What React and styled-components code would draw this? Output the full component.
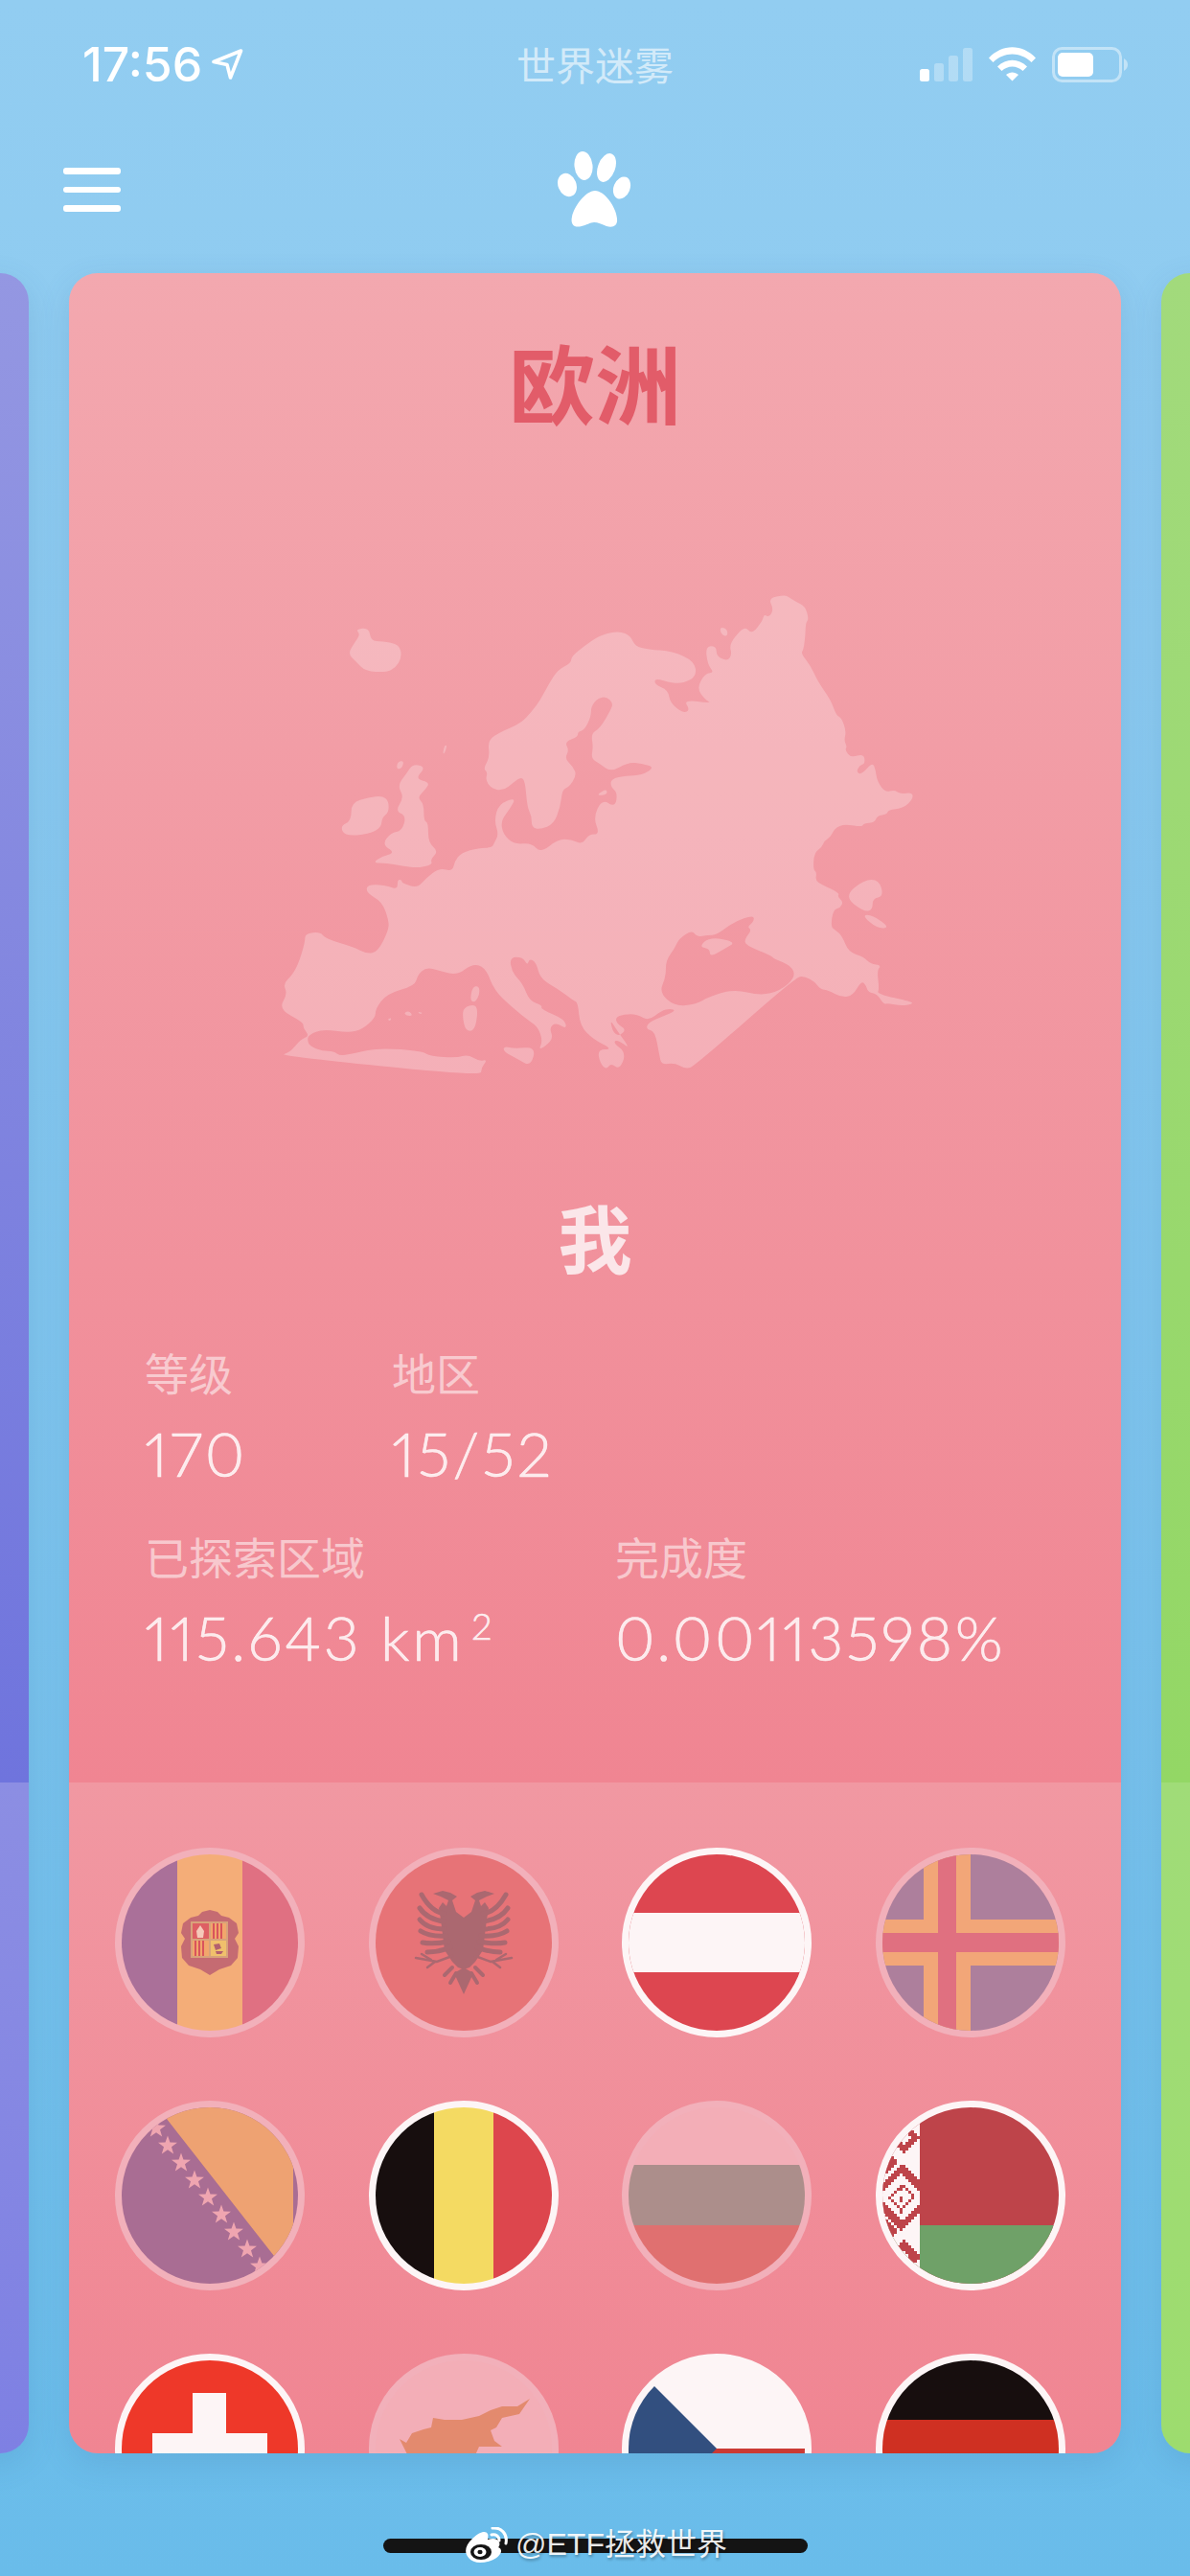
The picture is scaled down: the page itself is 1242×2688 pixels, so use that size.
import React from "react";
import styled, { createGlobalStyle } from "styled-components";

const GlobalStyle = createGlobalStyle`
  html, body {
    margin: 0;
    padding: 0;
    background: #69bcea;
  }
  * {
    box-sizing: border-box;
  }
`;

const CJK = `"Noto Sans CJK SC", "Noto Sans", sans-serif`;
const WHITE = "#fdf5f6";
const DIM_RING = "#f2b0ba";

const Screen = styled.div`
  position: relative;
  width: 1242px;
  height: 2688px;
  overflow: hidden;
  display: flex;
  flex-direction: column;
  background: linear-gradient(180deg, #92cdf1 0%, #8ccaf0 25%, #69bcea 100%);
  font-family: ${CJK};
`;

const StatusBar = styled.div`
  height: 134px;
  display: grid;
  grid-template-columns: 1fr auto 1fr;
  align-items: center;
  padding: 0 65px;
`;

const Clock = styled.div`
  display: flex;
  align-items: center;
  gap: 10px;
  padding-left: 21px;
  color: #fff;
  font-family: Inter, "Liberation Sans", sans-serif;
  font-size: 50px;
  font-weight: 500;
  line-height: 60px;
`;

const AppName = styled.div`
  margin-top: -3px;
  color: rgba(255, 255, 255, 0.6);
  font-size: 41px;
  line-height: 50px;
`;

const StatusIcons = styled.div`
  display: flex;
  justify-content: flex-end;
  align-items: center;
  gap: 17px;
`;

const Nav = styled.div`
  height: 151px;
  display: grid;
  grid-template-columns: 1fr auto 1fr;
  align-items: start;
  padding: 24px 66px 0;
`;

const MenuButton = styled.div`
  margin-top: 17px;
  width: 60px;
  display: flex;
  flex-direction: column;
  gap: 13px;
`;

const MenuLine = styled.span`
  display: block;
  height: 6.5px;
  border-radius: 3px;
  background: #fff;
`;

const Carousel = styled.div`
  display: flex;
  justify-content: center;
  gap: 42px;
  height: 2275px;
`;

const Card = styled.div`
  flex: 0 0 1098px;
  border-radius: 30px;
  overflow: hidden;
  display: flex;
  flex-direction: column;
  box-shadow: 0 10px 32px rgba(50, 100, 150, 0.16);
`;

const CardTop = styled.div`
  flex: 0 0 1575px;
  display: flex;
  flex-direction: column;
  align-items: center;
  padding-top: 60px;
  background: linear-gradient(180deg, ${(p) => p.$from}, ${(p) => p.$to});
`;

const CardBottom = styled.div`
  flex: 1;
  min-height: 0;
  overflow: hidden;
  background: linear-gradient(180deg, ${(p) => p.$from}, ${(p) => p.$to});
`;

const ContinentName = styled.h1`
  margin: 0;
  color: #e25c69;
  font-size: 90px;
  line-height: 104px;
  font-weight: 700;
`;

const ContinentMap = styled.svg`
  display: block;
  margin-top: 141px;
  width: 720px;
  height: 550px;
  flex: none;
`;

const PlayerName = styled.h2`
  margin: 105px 0 0;
  color: #fbe6e9;
  font-size: 77px;
  line-height: 90px;
  font-weight: 700;
`;

const Stats = styled.div`
  align-self: stretch;
  margin-top: 66px;
  padding-left: 79px;
  display: flex;
  flex-direction: column;
  gap: 36px;
`;

const StatRow = styled.div`
  display: flex;
`;

const Stat = styled.div`
  width: ${(p) => p.$width}px;
`;

const StatLabel = styled.div`
  color: rgba(255, 255, 255, 0.55);
  font-size: 46px;
  line-height: 60px;
`;

const StatValue = styled.div`
  margin-top: 16px;
  color: rgba(255, 255, 255, 0.82);
  font-family: Lato, Inter, sans-serif;
  font-weight: 300;
  font-size: 64px;
  font-variant-numeric: proportional-nums;
  letter-spacing: 2.6px;
  line-height: 80px;
  -webkit-text-stroke: 0.6px rgba(255, 255, 255, 0.82);
  white-space: nowrap;
`;

const Exponent = styled.sup`
  margin-left: 8px;
  font-size: 38px;
  line-height: 0;
  vertical-align: 22px;
`;

const FlagGrid = styled.div`
  display: grid;
  grid-template-columns: repeat(4, 198px);
  column-gap: 66.6px;
  row-gap: 66px;
  padding: 68px 58px 0 48px;
`;

const Flag = styled.div`
  width: 198px;
  height: 198px;
  border-radius: 50%;
  overflow: hidden;
  background: ${(p) => (p.$visited ? WHITE : DIM_RING)};
  border: 7px solid ${(p) => (p.$visited ? WHITE : DIM_RING)};
`;

const FlagArt = styled.svg`
  display: block;
  width: 184px;
  height: 184px;
`;

const HomeIndicator = styled.div`
  width: 443px;
  height: 15px;
  margin: 89px auto 0;
  border-radius: 8px;
  background: #141414;
`;

const Watermark = styled.div`
  position: absolute;
  left: 485px;
  top: 2634px;
  display: flex;
  align-items: center;
  gap: 8px;
  color: rgba(255, 255, 255, 0.92);
  font-family: "Liberation Sans", ${CJK};
  font-size: 32px;
  line-height: 42px;
  white-space: nowrap;
  text-shadow: 1px 2px 3px rgba(0, 0, 0, 0.3);
`;

const MAINLAND =
  "M1178 98L1215 88L1225 95L1240 108L1262 122L1270 160L1263 170L1262 210L1258 250L1252 262L1275 300L1290 345L1320 400L1332 445L1345 455L1355 495L1350 520L1357 540L1352 548L1365 572L1395 560L1398 590L1385 595L1378 615L1390 622L1415 585L1422 610L1425 640L1443 675L1465 668L1478 680L1505 675L1507 695L1485 722L1450 728L1448 740L1425 745L1420 765L1395 768L1390 778L1355 770L1340 775L1328 785L1318 810L1305 820L1300 838L1282 855L1280 905L1288 912L1285 938L1300 950L1340 975L1335 985L1348 1000L1342 1018L1325 1025L1320 1075L1330 1085L1345 1100L1360 1150L1395 1165L1410 1185L1435 1190L1425 1205L1430 1260L1425 1275L1505 1298L1505 1305L1480 1310L1450 1303L1440 1305L1425 1275L1405 1270L1400 1250L1390 1235L1370 1280L1345 1285L1315 1265L1295 1260L1285 1240L1260 1222L1240 1225L1010 1490L990 1498L965 1480L935 1485L930 1455L920 1385L900 1380L905 1360L940 1340L968 1325L955 1318L935 1325L905 1355L880 1335L850 1335L830 1345L835 1365L855 1380L840 1400L825 1390L818 1350L835 1385L865 1440L835 1410L825 1420L855 1450L840 1500L820 1480L810 1500L795 1480L790 1440L825 1440L780 1410L750 1370L745 1300L735 1295L700 1260L660 1230L650 1180L635 1170L630 1190L620 1165L590 1165L595 1210L620 1245L635 1295L665 1310L660 1320L715 1350L720 1380L695 1360L680 1375L690 1410L655 1445L665 1415L655 1375L635 1355L600 1320L555 1265L535 1195L505 1185L470 1220L430 1205L400 1195L380 1220L375 1250L310 1275L285 1320L285 1345L255 1380L225 1390L165 1380L135 1395L130 1410L135 1430L165 1445L190 1445L205 1460L240 1450L295 1435L390 1445L410 1460L470 1465L495 1455L520 1475L540 1470L525 1495L525 1520L65 1458L90 1450L115 1410L135 1400L120 1375L122 1360L65 1320L85 1275L75 1245L95 1220L110 1185L125 1120L125 1095L160 1090L170 1110L235 1135L265 1155L290 1150L315 1085L315 1055L300 1000L265 975L265 950L305 950L335 965L335 935L345 935L345 945L380 960L400 930L430 900L460 910L465 880L480 855L520 840L550 840L555 825L565 800L555 760L565 710L605 690L590 725L570 760L575 800L600 830L640 825L660 855L700 815L730 815L755 830L770 800L795 800L780 750L800 695L830 720L835 675L820 660L820 635L855 625L890 625L920 600L890 590L860 585L820 615L795 590L775 575L780 540L775 500L795 485L820 430L825 410L810 390L790 395L775 420L775 450L760 490L745 495L745 510L715 525L725 550L715 575L735 600L742 625L725 660L710 665L705 720L690 770L660 785L640 780L640 745L630 720L625 640L615 630L600 645L575 670L550 665L535 640L540 615L530 605L545 570L540 520L570 495L615 470L640 435L660 400L680 350L700 310L730 290L730 270L770 230L800 205L840 195L865 210L875 240L905 250L960 255L1010 285L1015 330L985 350L960 350L920 335L920 355L950 370L955 410L985 440L1000 430L985 400L1050 410L1035 400L1015 365L1035 320L1055 320L1040 295L1035 240L1060 240L1060 270L1085 285L1095 265L1090 240L1100 215L1125 180L1140 205L1165 165L1168 145L1180 155L1190 130Z";
const BLACK_SEA =
  "M965 1312L930 1270L945 1225L945 1175L965 1140L975 1110L1005 1085L1015 1105L1040 1100L1060 1100L1100 1060L1145 1040L1145 1060L1130 1075L1140 1085L1125 1110L1125 1130L1185 1160L1190 1170L1230 1190L1240 1225L1205 1265L1160 1280L1100 1260L1040 1285L1015 1305Z";
const CRIMEA = "M1020 1135L1045 1105L1105 1120L1080 1140L1045 1165L1045 1140Z";
const ISLANDS = [
  "M222 262L240 225L250 205L240 190L270 185L275 225L300 225L340 235L345 275L330 305L310 318L262 315L240 285Z",
  "M205 775L230 760L230 705L270 690L300 685L315 700L315 735L300 750L298 780L270 800L215 805Z",
  "M370 590L400 600L375 635L408 645L400 665L380 690L395 710L395 760L405 765L405 825L428 850L410 875L415 890L380 900L350 895L310 885L278 885L300 865L330 855L300 830L320 795L345 790L355 745L330 730L350 690L335 655L355 620Z",
  "M335 585L350 580L345 605L333 605Z",
  "M442 535L448 535L442 560L438 560Z",
  "M505 1255L520 1250L522 1275L512 1300L500 1295Z",
  "M485 1315L512 1305L518 1330L510 1385L490 1385L483 1345Z",
  "M578 1430L600 1438L650 1432L638 1490L610 1470L575 1445Z",
  "M350 1330L362 1325L370 1340L355 1340Z",
  "M312 1350L322 1345L318 1356Z",
  "M380 1328L392 1330L388 1336Z",
  "M790 680L810 665L812 680L795 685Z",
  "M1350 985L1395 935L1430 935L1440 985L1415 990L1415 1025L1395 1030Z",
  "M1390 1040L1415 1040L1455 1078L1425 1080Z",
  "M1068 182L1085 190L1085 212L1070 205Z",
];

// rounds the traced coast: each corner becomes a curve through the edge midpoints
const smoothCoast = (d) => {
  const pts = d
    .replace(/[MZ]/g, "")
    .split("L")
    .map((p) => p.trim().split(" ").map(Number));
  const mid = (a, b) => [(a[0] + b[0]) / 2, (a[1] + b[1]) / 2];
  const start = mid(pts[pts.length - 1], pts[0]);
  let out = `M${start[0]} ${start[1]}`;
  pts.forEach((p, i) => {
    const m = mid(p, pts[(i + 1) % pts.length]);
    out += `Q${p[0]} ${p[1]} ${m[0]} ${m[1]}`;
  });
  return `${out}Z`;
};

const Europe = () => (
  <ContinentMap viewBox="0 0 1568 1568" preserveAspectRatio="none">
    <path
      d={[MAINLAND, BLACK_SEA, CRIMEA].map(smoothCoast).join(" ")}
      fill="#fff"
      fillOpacity="0.25"
      fillRule="evenodd"
    />
    <path d={ISLANDS.map(smoothCoast).join(" ")} fill="#fff" fillOpacity="0.25" />
  </ContinentMap>
);

const starPoints = (cx, cy, r) => {
  const pts = [];
  for (let i = 0; i < 10; i++) {
    const rad = i % 2 === 0 ? r : r * 0.4;
    const a = -Math.PI / 2 + (i * Math.PI) / 5;
    pts.push(`${cx + rad * Math.cos(a)},${cy + rad * Math.sin(a)}`);
  }
  return pts.join(" ");
};

const Andorra = () => (
  <FlagArt viewBox="0 0 184 184">
    <rect width="58" height="184" fill="#aa7099" />
    <rect x="58" width="68" height="184" fill="#f4ad78" />
    <rect x="126" width="58" height="184" fill="#e07082" />
    <path
      d="M72 66L80 64L84 60L92 58L100 60L104 64L112 66L120 72L122 82L118 88L122 96L121 108L114 116L102 120L92 126L82 120L70 116L63 108L62 96L66 88L62 82L64 72Z"
      fill="#c56b72"
    />
    <rect x="72" y="70" width="39" height="38" fill="#d8a27a" />
    <rect x="74" y="72" width="17" height="16" fill="#de5f63" />
    <path d="M82 74L86 80L85 87L79 87L78 80Z" fill="#f5c9b9" />
    <rect x="93" y="72" width="16" height="16" fill="#f2a66c" />
    <path d="M96 72V88M100 72V88M104 72V88" stroke="#d9545c" strokeWidth="2" />
    <rect x="74" y="90" width="17" height="16" fill="#f2a66c" />
    <path d="M77 90V106M81 90V106M85 90V106" stroke="#d9545c" strokeWidth="2" />
    <rect x="93" y="90" width="16" height="16" fill="#f0c06c" />
    <path d="M96 94L102 93L104 98L98 100ZM98 101L106 101L104 104L99 104Z" fill="#b3606e" />
  </FlagArt>
);

const EAGLE_FEATHERS = [
  "M112 62Q126 60 136 42",
  "M112 70Q130 68 138 56",
  "M112 78Q130 78 138 68",
  "M110 85Q128 86 137 80",
  "M108 91Q124 94 135 92",
  "M106 97Q118 102 130 102",
];

const EagleHalf = () => (
  <g fill="#ab6870">
    <path d="M92 66L100 60L104 48L99 44L106 40L114 38L124 41L116 44L108 48L110 54L114 50L118 56L116 68L112 100L104 112L98 118L92 120Z" />
    <g fill="none" stroke="#ab6870" strokeWidth="5" strokeLinecap="round">
      {EAGLE_FEATHERS.map((d) => (
        <path key={d} d={d} />
      ))}
      <path d="M104 118L112 126M100 124L106 134" strokeWidth="4" />
    </g>
    <g fill="none" stroke="#ab6870" strokeWidth="2.5" strokeLinecap="round">
      <path d="M104 106L120 112L142 108M122 112L130 118M126 110L136 104" />
    </g>
    <path d="M92 118L102 124L92 146Z" />
  </g>
);

const Albania = () => (
  <FlagArt viewBox="0 0 184 184">
    <rect width="184" height="184" fill="#e77377" />
    <EagleHalf />
    <g transform="translate(184 0) scale(-1 1)">
      <EagleHalf />
    </g>
  </FlagArt>
);

const Austria = () => (
  <FlagArt viewBox="0 0 184 184">
    <rect width="184" height="184" fill="#dd4650" />
    <rect y="61" width="184" height="62" fill={WHITE} />
  </FlagArt>
);

const Aland = () => (
  <FlagArt viewBox="0 0 184 184">
    <rect width="184" height="184" fill="#ad7f9c" />
    <rect x="43" width="49" height="184" fill="#f2a678" />
    <rect y="68" width="184" height="48" fill="#f2a678" />
    <rect x="58" width="19" height="184" fill="#e07080" />
    <rect y="82" width="184" height="20" fill="#e07080" />
  </FlagArt>
);

const BOSNIA_STARS = [
  [36, 22],
  [48, 40],
  [62, 58],
  [76, 76],
  [90, 94],
  [104, 112],
  [117, 130],
  [131, 148],
  [144, 166],
];

const Bosnia = () => (
  <FlagArt viewBox="0 0 184 184">
    <rect width="184" height="184" fill="#a96d93" />
    <path d="M38 0H179V184H180L159 155L47 12Z" fill="#eea272" />
    {BOSNIA_STARS.map(([x, y]) => (
      <polygon key={x} points={starPoints(x, y, 10.5)} fill="#efa5b0" />
    ))}
  </FlagArt>
);

const Belgium = () => (
  <FlagArt viewBox="0 0 184 184">
    <rect width="61" height="184" fill="#170e0e" />
    <rect x="61" width="62" height="184" fill="#f4da62" />
    <rect x="123" width="61" height="184" fill="#dd464d" />
  </FlagArt>
);

const Bulgaria = () => (
  <FlagArt viewBox="0 0 184 184">
    <rect width="184" height="60" fill="#f3aeb7" />
    <rect y="60" width="184" height="63" fill="#ac8e8b" />
    <rect y="123" width="184" height="61" fill="#e07070" />
  </FlagArt>
);

// woven hoist pattern, worked out on a 3px grid
const belarusCells = () => {
  const cells = [];
  for (let row = 0; row < 62; row++) {
    for (let col = 0; col < 13; col++) {
      const x = col * 3;
      const y = row * 3;
      const mid = Math.abs(x - 19) + Math.abs(y - 92);
      const top = Math.abs(x - 21) + Math.abs(Math.abs(y - 92) - 62);
      const side = Math.abs(x - 3) + Math.abs(Math.abs(y - 92) - 36);
      const inMid = mid > 24 && mid < 36;
      const speck = mid < 18 && (mid % 12 < 3 || (x === 18 && y % 12 === 0));
      const inTop = top > 6 && top < 18;
      const inSide = side < 12 && side > 3;
      if (inMid || speck || inTop || inSide) cells.push([x, y]);
    }
  }
  return cells;
};

const Belarus = () => (
  <FlagArt viewBox="0 0 184 184" shapeRendering="crispEdges">
    <rect width="184" height="184" fill="#be444a" />
    <rect y="123" width="184" height="61" fill="#6fa168" />
    <rect width="39" height="184" fill={WHITE} />
    {belarusCells().map(([x, y]) => (
      <rect key={`${x}-${y}`} x={x} y={y} width="3" height="3" fill="#be444a" />
    ))}
  </FlagArt>
);

const Switzerland = () => (
  <FlagArt viewBox="0 0 184 184">
    <rect width="184" height="184" fill="#ee3829" />
    <rect x="74" y="34" width="35" height="116" fill={WHITE} />
    <rect x="32" y="76" width="120" height="33" fill={WHITE} />
  </FlagArt>
);

const Cyprus = () => (
  <FlagArt viewBox="0 0 184 184">
    <rect width="184" height="184" fill="#f3aeb7" />
    <path
      d="M161 40L150 56L132 60L126 70L120 73L124 84L132 90L120 90L108 90L104 99L90 112L60 116L36 104L30 92L25 82L32 86L38 76L50 72L58 70L60 60L72 62L90 62L108 58L120 52L132 48L148 48Z"
      fill="#e38a6e"
    />
  </FlagArt>
);

const Czechia = () => (
  <FlagArt viewBox="0 0 184 184">
    <rect width="184" height="92" fill={WHITE} />
    <rect y="92" width="184" height="92" fill="#cb3a34" />
    <path d="M0 0L92 92L0 184Z" fill="#324f7f" />
  </FlagArt>
);

const Germany = () => (
  <FlagArt viewBox="0 0 184 184">
    <rect width="184" height="62" fill="#170e0e" />
    <rect y="62" width="184" height="61" fill="#cf3022" />
    <rect y="123" width="184" height="61" fill="#f4da62" />
  </FlagArt>
);

const FLAGS = [
  { code: "ad", Art: Andorra },
  { code: "al", Art: Albania },
  { code: "at", Art: Austria, visited: true },
  { code: "ax", Art: Aland },
  { code: "ba", Art: Bosnia },
  { code: "be", Art: Belgium, visited: true },
  { code: "bg", Art: Bulgaria },
  { code: "by", Art: Belarus, visited: true },
  { code: "ch", Art: Switzerland, visited: true },
  { code: "cy", Art: Cyprus },
  { code: "cz", Art: Czechia, visited: true },
  { code: "de", Art: Germany, visited: true },
];

const LocationArrow = () => (
  <svg width="33" height="32" viewBox="0 0 33 32" fill="none">
    <path
      d="M2 13.5L30.5 2L19.5 30L16 16.5Z"
      stroke="#fff"
      strokeWidth="3.6"
      strokeLinejoin="round"
    />
  </svg>
);

const SignalIcon = () => (
  <svg width="55" height="35" viewBox="0 0 55 35">
    <rect y="22" width="10" height="13" rx="2.5" fill="#fff" />
    <rect x="15" y="16" width="10" height="19" rx="2.5" fill="#fff" fillOpacity="0.3" />
    <rect x="30" y="8" width="10" height="27" rx="2.5" fill="#fff" fillOpacity="0.3" />
    <rect x="45" width="10" height="35" rx="2.5" fill="#fff" fillOpacity="0.3" />
  </svg>
);

const WifiIcon = () => (
  <svg width="49" height="36" viewBox="0 0 49 36" fill="#fff">
    <path d="M0 11.5C14 -3.5 35 -3.5 49 11.5L44.5 16C33 4.5 16 4.5 4.5 16Z" />
    <path d="M9 20.5C18 11.5 31 11.5 40 20.5L35.5 25C29 19 20 19 13.5 25Z" />
    <path d="M18 29C22 25.5 27 25.5 31 29L24.5 35.5Z" />
  </svg>
);

const BatteryIcon = () => (
  <svg width="79" height="37" viewBox="0 0 79 37">
    <rect
      x="1.5"
      y="1.5"
      width="70"
      height="34"
      rx="9"
      fill="none"
      stroke="#fff"
      strokeOpacity="0.45"
      strokeWidth="3"
    />
    <rect x="6" y="6" width="37" height="25" rx="5" fill="#fff" />
    <path d="M75 12C78 14 79 16 79 18.5C79 21 78 23 75 25Z" fill="#fff" fillOpacity="0.45" />
  </svg>
);

const PawIcon = () => (
  <svg width="80" height="80" viewBox="0 0 80 80" fill="#fff">
    <ellipse cx="28" cy="15" rx="9.5" ry="15" transform="rotate(-6 28 15)" />
    <ellipse cx="52" cy="17" rx="9" ry="15.5" transform="rotate(20 52 17)" />
    <ellipse cx="11" cy="35" rx="9.5" ry="12.5" transform="rotate(-22 11 35)" />
    <ellipse cx="68" cy="38" rx="8.5" ry="12" transform="rotate(22 68 38)" />
    <path d="M40 41C50 41 62 58 63 70C64 78 58 80 52 78C47 76 43 74 39 74C35 74 31 77 26 78C19 80 14 77 16 68C18 58 30 41 40 41Z" />
  </svg>
);

const WeiboIcon = () => (
  <svg width="45" height="37" viewBox="0 0 45 37">
    <path
      d="M5 33C-1 27 0 20 8 12C15 5 22 3 24 7C25 9 24 11 24 13C30 11 35 12 36 16C37 18 36 20 35 21C38 22 39 25 37 28C33 34 24 37 16 37C11 37 7 35 5 33Z"
      fill="#fff"
    />
    <ellipse cx="17" cy="26" rx="11" ry="8" fill="#141414" />
    <ellipse cx="16" cy="26" rx="6.5" ry="5" fill="#fff" />
    <ellipse cx="16" cy="26" rx="2.6" ry="2.2" fill="#141414" />
    <path
      d="M28 8C32 7 36 9 36 14M29 1C38 0 45 7 43 17"
      fill="none"
      stroke="#fff"
      strokeWidth="3"
      strokeLinecap="round"
    />
  </svg>
);

export default function App() {
  return (
    <Screen>
      <GlobalStyle />
      <StatusBar>
        <Clock>
          17:56
          <LocationArrow />
        </Clock>
        <AppName>世界迷雾</AppName>
        <StatusIcons>
          <SignalIcon />
          <WifiIcon />
          <BatteryIcon />
        </StatusIcons>
      </StatusBar>
      <Nav>
        <MenuButton>
          <MenuLine />
          <MenuLine />
          <MenuLine />
        </MenuButton>
        <PawIcon />
      </Nav>
      <Carousel>
        <Card>
          <CardTop $from="#9497e2" $to="#6f74dd" />
          <CardBottom $from="#8c8ee3" $to="#7e80e3" />
        </Card>
        <Card>
          <CardTop $from="#f3a8af" $to="#f08592">
            <ContinentName>欧洲</ContinentName>
            <Europe />
            <PlayerName>我</PlayerName>
            <Stats>
              <StatRow>
                <Stat $width={258}>
                  <StatLabel>等级</StatLabel>
                  <StatValue>170</StatValue>
                </Stat>
                <Stat $width={300}>
                  <StatLabel>地区</StatLabel>
                  <StatValue>15/52</StatValue>
                </Stat>
              </StatRow>
              <StatRow>
                <Stat $width={491}>
                  <StatLabel>已探索区域</StatLabel>
                  <StatValue>
                    115.643 km<Exponent>2</Exponent>
                  </StatValue>
                </Stat>
                <Stat $width={460}>
                  <StatLabel>完成度</StatLabel>
                  <StatValue>0.00113598%</StatValue>
                </Stat>
              </StatRow>
            </Stats>
          </CardTop>
          <CardBottom $from="#f198a2" $to="#f08592">
            <FlagGrid>
              {FLAGS.map(({ code, Art, visited }) => (
                <Flag key={code} $visited={visited}>
                  <Art />
                </Flag>
              ))}
            </FlagGrid>
          </CardBottom>
        </Card>
        <Card>
          <CardTop $from="#a2da7c" $to="#93d765" />
          <CardBottom $from="#a0dc78" $to="#9ddc6e" />
        </Card>
      </Carousel>
      <HomeIndicator />
      <Watermark>
        <WeiboIcon />
        @ETF拯救世界
      </Watermark>
    </Screen>
  );
}
